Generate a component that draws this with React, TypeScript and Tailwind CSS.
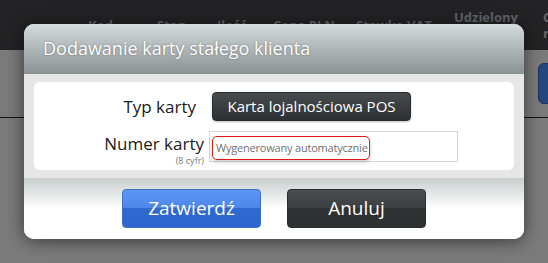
import React from 'react'

const font = { fontFamily: '"Open Sans", "Noto Sans", sans-serif' }

const columns = [
  { label: 'Kod', w: 'w-[69px]' },
  { label: 'Stan', w: 'w-[60px]' },
  { label: 'Ilość', w: 'w-[56px]' },
  { label: 'Cena PLN', w: 'w-[83px]' },
  { label: 'Stawka VAT', w: 'w-[98px]' },
  { label: 'Udzielony rabat', w: 'w-[89px]' },
  { label: 'Cena rabat', w: 'w-[60px]' },
]

function Background() {
  return (
    <div className="flex flex-col h-full">
      {/* table header bar, dimmed by the overlay */}
      <div className="h-[50px] bg-[#232325] flex items-center pl-[88px] shrink-0">
        {columns.map((c) => (
          <div
            key={c.label}
            className={`${c.w} shrink-0 text-[13px] leading-4 font-bold text-[#62666a]`}
          >
            {c.label}
          </div>
        ))}
      </div>
      <div className="h-[67px] flex justify-end items-start pt-[13px] shrink-0">
        <div className="w-[20px] h-[41px] mr-[-10px] rounded-[6px] bg-[#24477f] border border-[#1b3260]" />
      </div>
      <div className="h-px bg-[#151515]" />
      <div className="flex-1" />
    </div>
  )
}

function Dialog() {
  return (
    <div className="absolute left-[24px] top-[24px] w-[500px] h-[215px] rounded-[10px] overflow-hidden flex flex-col bg-white shadow-[0_2px_18px_rgba(0,0,0,0.55)]">
      {/* header */}
      <div className="h-[50px] shrink-0 bg-gradient-to-b from-[#d5dcde] to-[#899294] flex items-center pl-[19px] pb-[1px]">
        <span className="text-[18px] text-white [text-shadow:0_0_2px_rgba(60,60,60,0.6)]">
          Dodawanie karty stałego klienta
        </span>
      </div>

      {/* body */}
      <div className="h-[104px] shrink-0 bg-[#e6e6e6] pt-[8px] px-[10px]">
        <div className="h-[88px] bg-white rounded-[6px] pt-[10px] flex flex-col gap-[10px]">
          <div className="flex items-center h-[29px]">
            <div className="w-[162px] text-right text-[17px] text-[#1a1a1a] leading-none">Typ karty</div>
            <button className="ml-[16px] w-[199px] h-[29px] rounded-[4px] bg-gradient-to-b from-[#474b4d] to-[#2d3133] border border-[#2a2d2f] text-white text-[15px] leading-none shadow-[0_1px_2px_rgba(0,0,0,0.25)]">
              Karta lojalnościowa POS
            </button>
          </div>
          <div className="flex items-start h-[31px]">
            <div className="w-[170px] flex flex-col items-end pt-[4px]">
              <span className="text-[17px] text-[#1a1a1a] leading-[18px]">Numer karty</span>
              <span className="text-[9px] text-[#777] leading-[9px] mt-[3px]">(8 cyfr)</span>
            </div>
            <div className="ml-[5px] w-[249px] h-[31px] border border-[#d6d6d6] bg-white pl-[2px] pt-[4px]">
              <div className="w-[158px] h-[24px] rounded-[5px] border-[1.5px] border-[#e01818] flex items-center pl-[3px] whitespace-nowrap text-[11px] tracking-[-0.2px] text-[#707070] shadow-[0_2px_4px_rgba(0,0,0,0.2)]">
                Wygenerowany automatycznie
              </div>
            </div>
          </div>
        </div>
      </div>

      {/* footer */}
      <div className="flex-1 bg-gradient-to-b from-[#c7cece] via-white to-white flex justify-center items-start pt-[11px] gap-[26px]">
        <button className="w-[139px] h-[39px] rounded-[4px] border border-[#3d6fc4] bg-[linear-gradient(to_bottom,#5c97f5_0%,#4c86e8_50%,#2f6ad0_50%,#2d66cc_100%)] text-white text-[19px] leading-none">
          Zatwierdź
        </button>
        <button className="w-[139px] h-[39px] rounded-[4px] border border-[#2a2d2f] bg-[linear-gradient(to_bottom,#4a4e50_0%,#3b3f41_50%,#2e3233_50%,#2d3132_100%)] text-white text-[19px] leading-none">
          Anuluj
        </button>
      </div>
    </div>
  )
}

export default function App() {
  return (
    <div className="relative w-[548px] h-[263px] overflow-hidden bg-[#7b7b7b]" style={font}>
      <Background />
      <Dialog />
    </div>
  )
}
